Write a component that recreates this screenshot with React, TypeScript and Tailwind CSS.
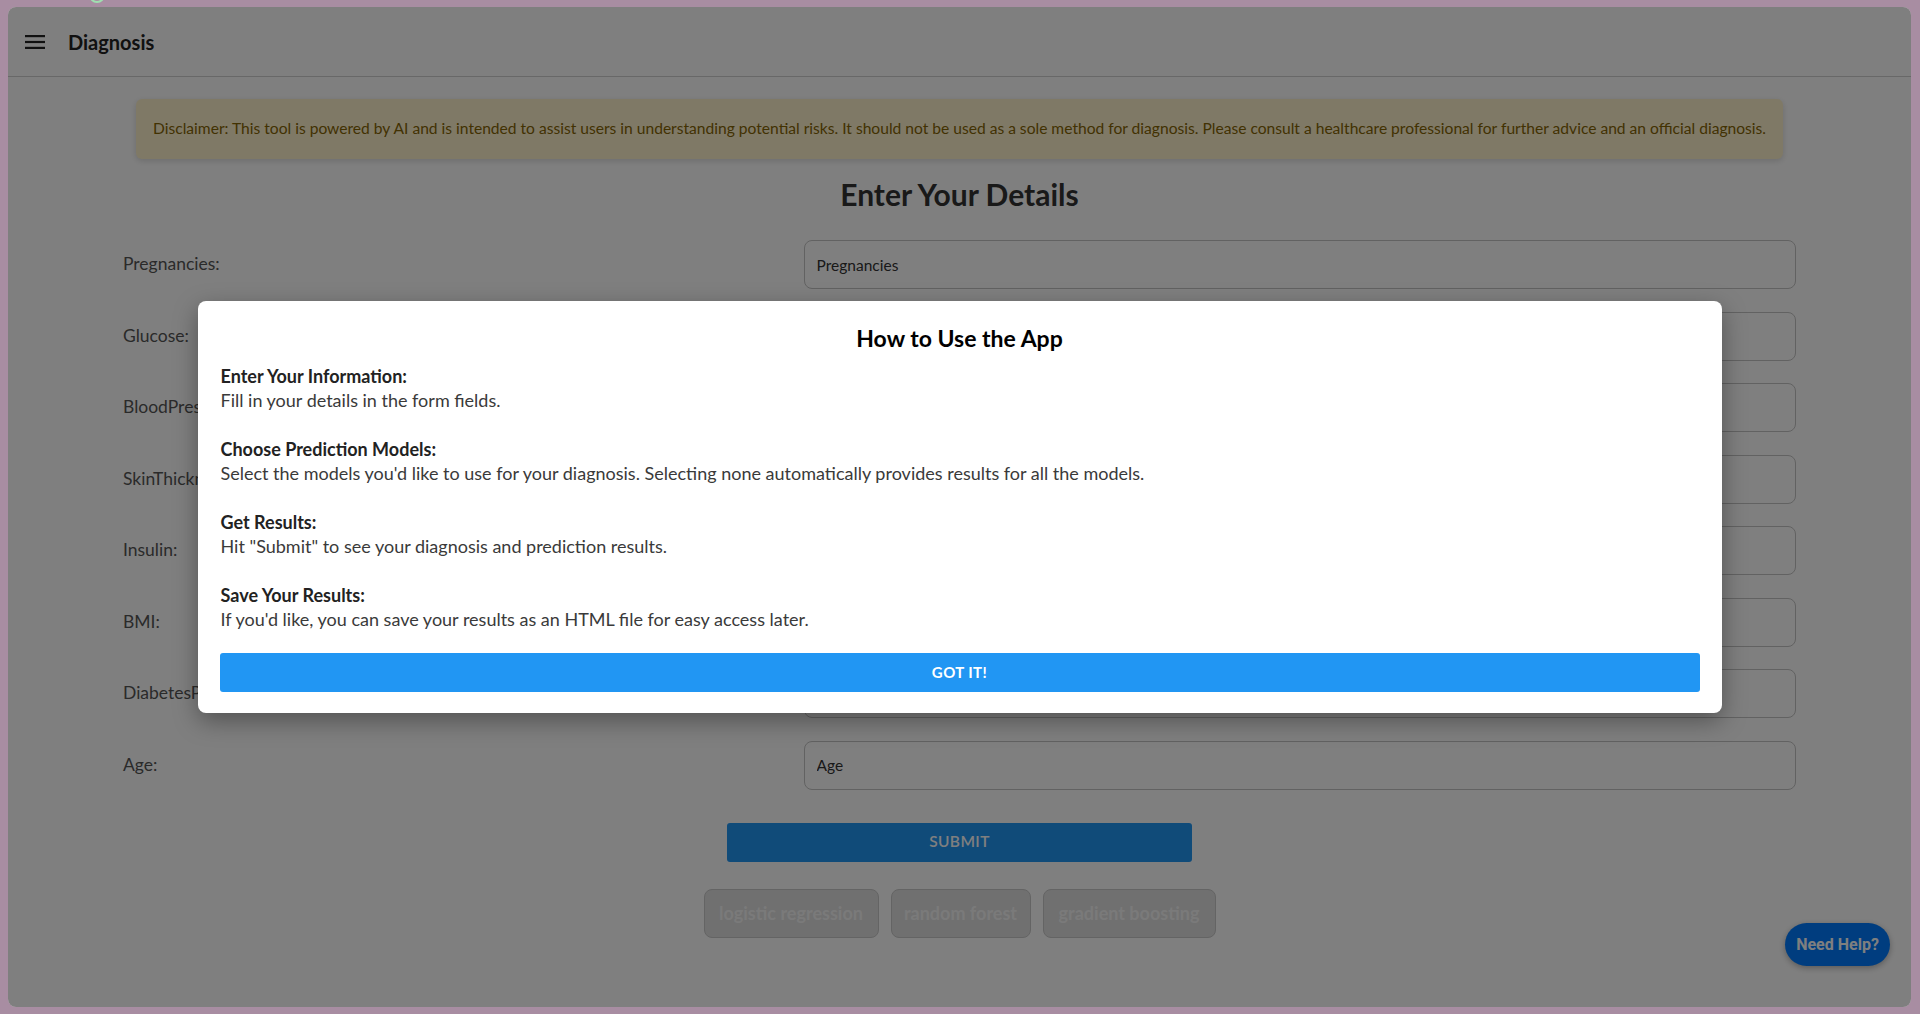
import React from "react";

const FIELDS = [
  "Pregnancies",
  "Glucose",
  "BloodPressure",
  "SkinThickness",
  "Insulin",
  "BMI",
  "DiabetesPedigreeFunction",
  "Age",
];

const MODELS = [
  { name: "logistic regression", w: "w-[175px]" },
  { name: "random forest", w: "w-[140px]" },
  { name: "gradient boosting", w: "w-[173px]" },
];

const STEPS = [
  { title: "Enter Your Information:", body: "Fill in your details in the form fields." },
  {
    title: "Choose Prediction Models:",
    body: "Select the models you'd like to use for your diagnosis. Selecting none automatically provides results for all the models.",
  },
  { title: "Get Results:", body: 'Hit "Submit" to see your diagnosis and prediction results.' },
  { title: "Save Your Results:", body: "If you'd like, you can save your results as an HTML file for easy access later." },
];

function MenuGlyph() {
  return (
    <svg width="20" height="14" viewBox="0 0 20 14" fill="#222">
      <rect x="0" y="0" width="20" height="2.2" />
      <rect x="0" y="5.9" width="20" height="2.2" />
      <rect x="0" y="11.8" width="20" height="2.2" />
    </svg>
  );
}

function HelpModal() {
  return (
    <div className="w-[1524px] bg-white rounded-[8px] shadow-[0_8px_24px_rgba(0,0,0,0.35)] px-[22px] pt-[21px] pb-[21px]">
      <h2 className="text-center text-[23px] leading-[33px] font-bold text-black">How to Use the App</h2>
      <div className="mt-[9px] flex flex-col gap-[25px] pl-[1px]">
        {STEPS.map((s) => (
          <div key={s.title} className="text-[18px] leading-[24px]">
            <div className="font-bold text-[#222]">{s.title}</div>
            <div className="text-[#3a3a3a]">{s.body}</div>
          </div>
        ))}
      </div>
      <button
        type="button"
        className="mt-[22px] w-full h-[39px] bg-[#2196f3] rounded-[3px] text-white text-[15px] font-bold tracking-[0.4px] uppercase"
      >
        Got it!
      </button>
    </div>
  );
}

export default function App() {
  return (
    <div
      className="relative w-[1920px] h-[1014px] overflow-hidden bg-[#a88da2] pt-[7px] pl-[8px] pr-[9px] pb-[7px]"
      style={{ fontFamily: "Lato, 'Noto Sans', sans-serif" }}
    >
      <div className="absolute left-[89px] top-[-13px] w-[16px] h-[16px] rounded-full border-2 border-[#9fe0b0]" />
      <div className="relative h-full bg-white rounded-[8px] overflow-hidden">
        <header className="h-[70px] border-b border-[#d0d0d0] flex items-center pl-[17px]">
          <MenuGlyph />
          <span className="ml-[23px] text-[20px] font-bold text-[#222]">Diagnosis</span>
        </header>

        <main className="px-[115px]">
          <div className="mx-[13px] mt-[22px] h-[60px] rounded-[6px] bg-[#fff3cd] shadow-[0_2px_6px_rgba(0,0,0,0.15)] flex items-center justify-center px-[16px]">
            <p className="text-[15.6px] text-[#856404] whitespace-nowrap">
              Disclaimer: This tool is powered by AI and is intended to assist users in understanding potential risks. It should not be used as a sole method for diagnosis. Please consult a healthcare professional for further advice and an official diagnosis.
            </p>
          </div>

          <h1 className="mt-[17px] text-center text-[30px] leading-[36px] font-bold text-[#333]">Enter Your Details</h1>

          <form className="mt-[28px] flex flex-col gap-[22.5px]">
            {FIELDS.map((f) => (
              <div key={f} className="flex items-center">
                <label className="w-[681px] text-[17.5px] text-[#555]">{f}:</label>
                <input
                  placeholder={f}
                  className="w-[993px] h-[49px] rounded-[8px] border border-[#c4c4c4] px-[12px] text-[15.5px] placeholder:text-[#333] outline-none"
                />
              </div>
            ))}
          </form>

          <div className="mt-[33px] flex justify-center">
            <button
              type="button"
              className="w-[465px] h-[39px] bg-[#2196f3] rounded-[3px] text-white text-[15.5px] font-semibold tracking-[0.4px]"
            >
              SUBMIT
            </button>
          </div>

          <div className="mt-[27px] flex justify-center gap-[12px]">
            {MODELS.map((m) => (
              <button
                key={m.name}
                type="button"
                className={`${m.w} h-[49px] rounded-[8px] border border-[#c8c8c8] bg-[#e0e0e0] text-[#f5f5f5] text-[18px] font-bold`}
              >
                {m.name}
              </button>
            ))}
          </div>
        </main>

        <button
          type="button"
          className="absolute right-[21px] bottom-[41px] w-[105px] h-[43px] rounded-full bg-[#007bff] text-white text-[16px] font-bold shadow-[0_2px_6px_rgba(0,0,0,0.3)]"
          style={{ fontFamily: "Roboto, sans-serif" }}
        >
          Need Help?
        </button>

        <div className="absolute inset-0 bg-black/50 flex items-center justify-center">
          <HelpModal />
        </div>
      </div>
    </div>
  );
}
